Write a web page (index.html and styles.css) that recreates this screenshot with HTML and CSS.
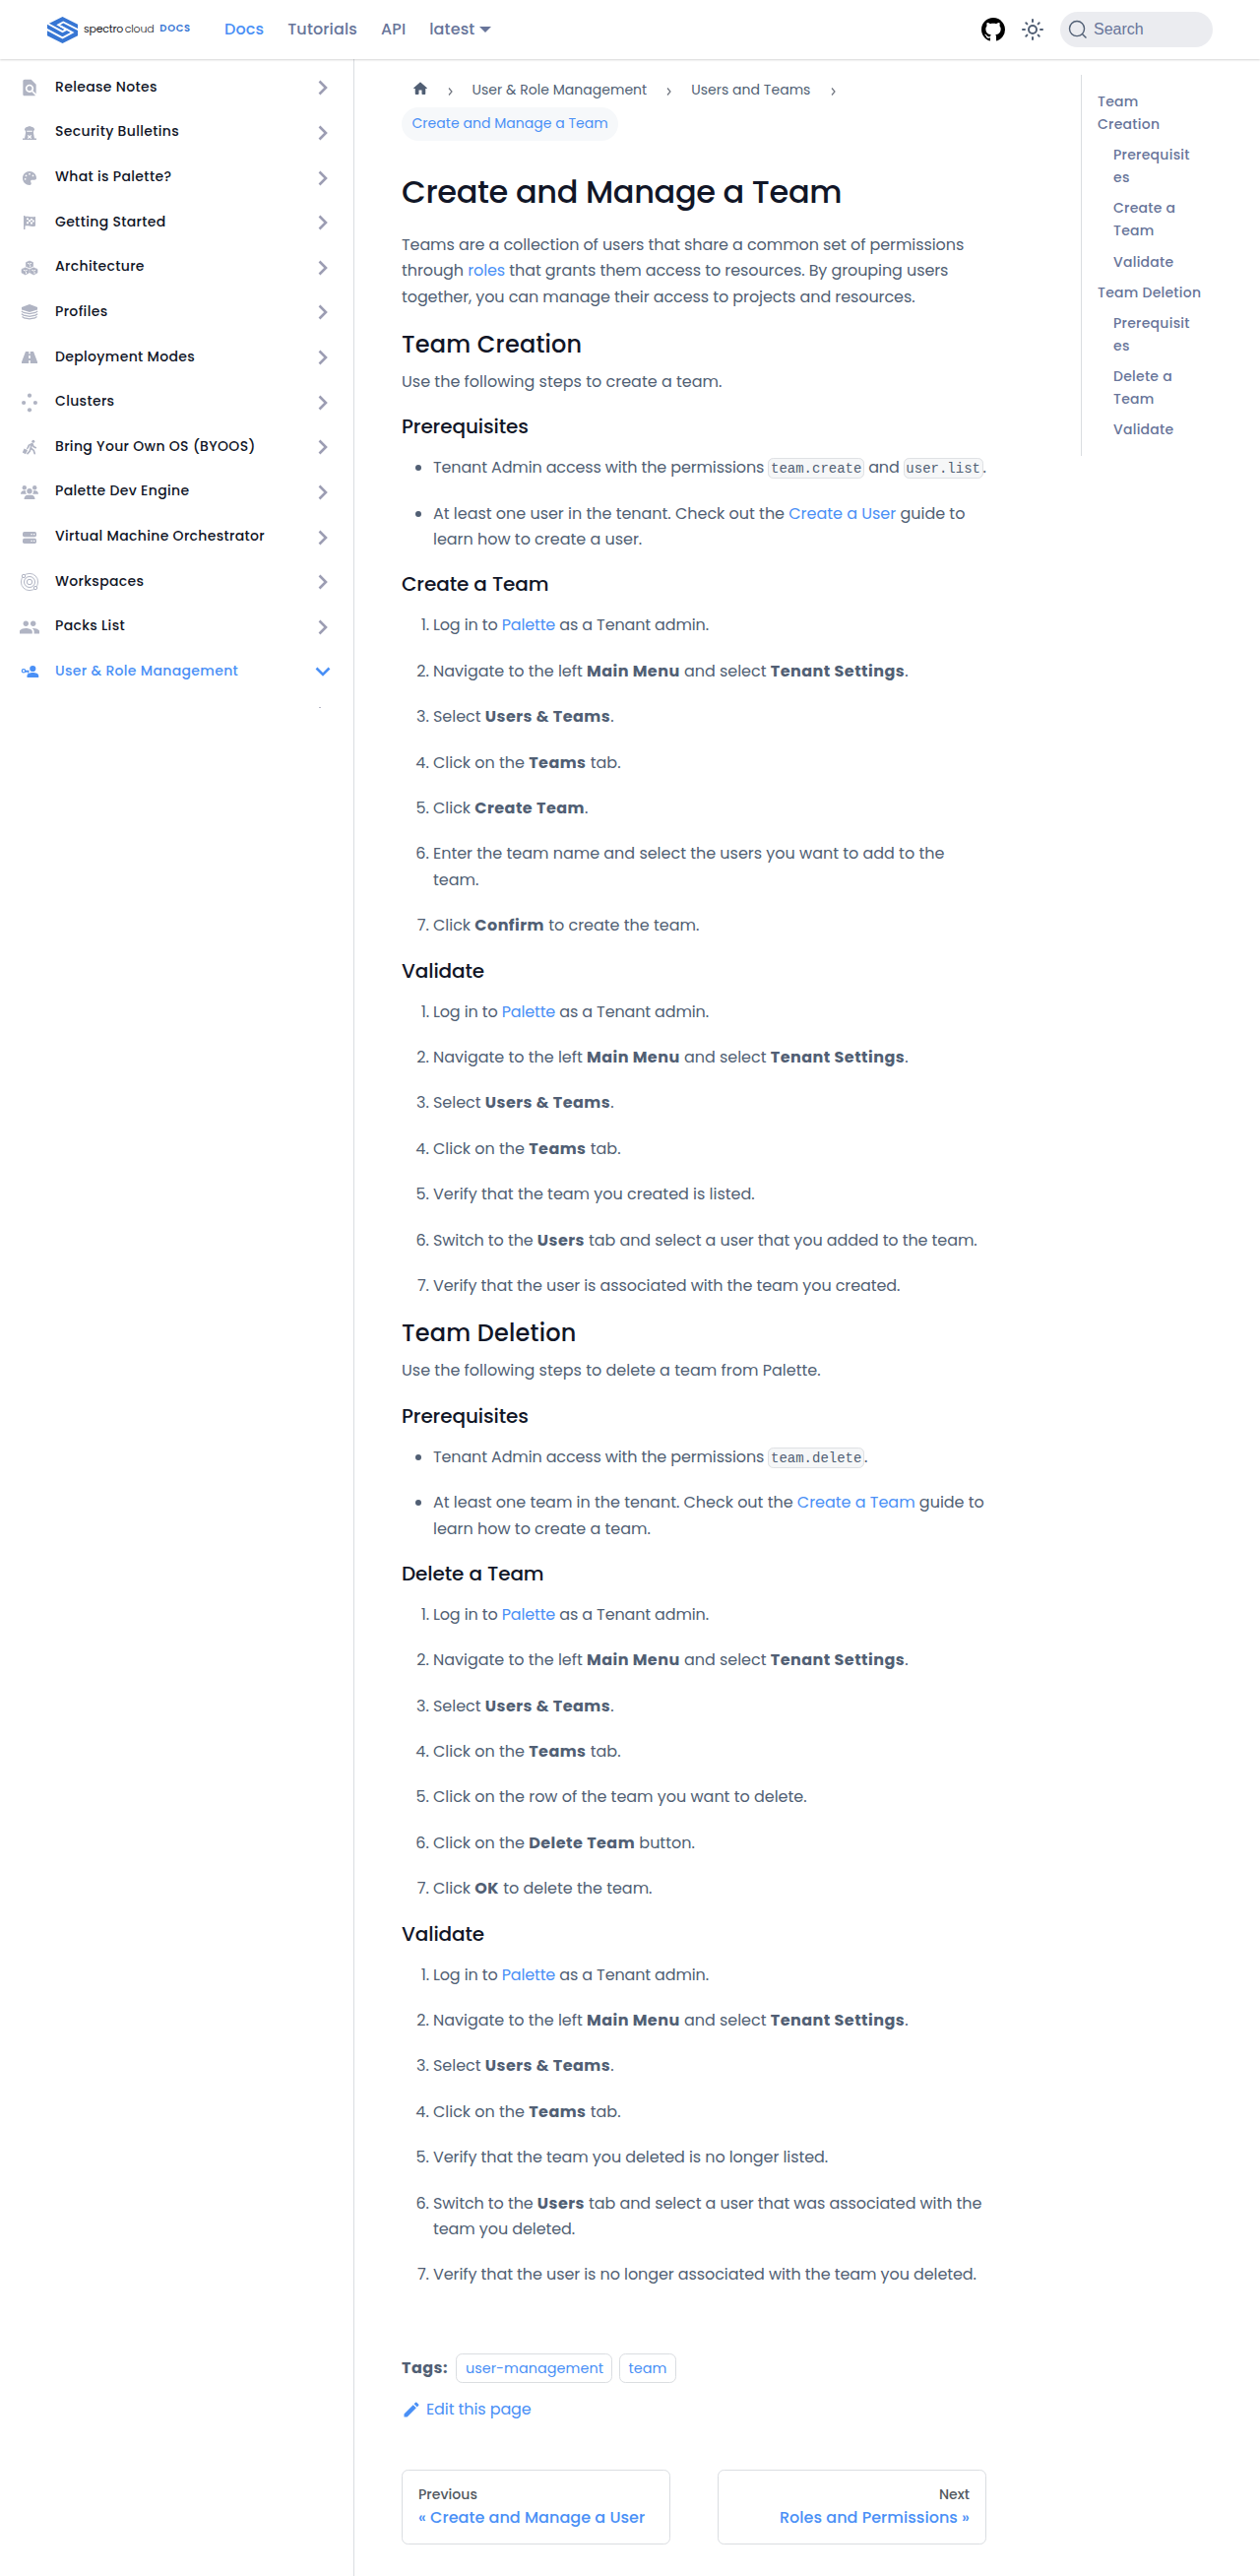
FILE: index.html
```html
<!DOCTYPE html>
<html lang="en">
<head>
<meta charset="utf-8">
<title>Create and Manage a Team | Palette</title>
<link rel="stylesheet" href="styles.css">
</head>
<body>
<nav class="navbar">
  <a class="brand" href="#">
    <svg class="brand-mark" viewBox="0 0 31 27"><path fill="#3776d4" d="M15.500 0L31 7.700V19.300L15.500 27L0 19.300V7.700Z"/><g fill="none" stroke="#fff" stroke-width="1.900"><path d="M-.5 6.500L15.500 15.200L19.600 12.900L11.200 8.300L16.200 5.500L31.500 13.300"/><path d="M-.5 12.800L15.500 21.400L25.500 16L13.500 9.500"/></g></svg>
    <span class="brand-name">spectro<span class="brand-thin"> cloud</span></span><span class="brand-docs">DOCS</span>
  </a>
  <div class="nav-links">
    <a class="active" href="#">Docs</a><a href="#">Tutorials</a><a href="#">API</a><a class="dropdown" href="#">latest</a>
  </div>
  <div class="nav-tools">
    <svg class="github" viewBox="0 0 16 16"><path d="M8 0C3.580 0 0 3.580 0 8c0 3.540 2.290 6.530 5.470 7.590.4.070.55-.17.55-.38 0-.19-.01-.82-.01-1.490-2.010.37-2.530-.49-2.690-.94-.09-.23-.48-.94-.82-1.130-.28-.15-.68-.52-.01-.53.63-.01 1.080.58 1.230.82.72 1.210 1.870.87 2.330.66.07-.52.28-.87.51-1.070-1.780-.2-3.640-.89-3.640-3.950 0-.87.31-1.590.82-2.150-.08-.2-.36-1.020.08-2.120 0 0 .67-.21 2.200.82.64-.18 1.320-.27 2-.27s1.360.09 2 .27c1.530-1.040 2.200-.82 2.200-.82.44 1.100.16 1.920.08 2.120.51.56.82 1.270.82 2.150 0 3.070-1.870 3.750-3.650 3.950.29.25.54.73.54 1.480 0 1.070-.01 1.930-.01 2.200 0 .21.15.46.55.38A8.010 8.010 0 0 0 16 8c0-4.420-3.580-8-8-8z"/></svg>
    <svg class="theme" viewBox="0 0 24 24"><g fill="none" stroke="currentColor" stroke-width="2" stroke-linecap="round"><circle cx="12" cy="12" r="4"/><path d="M12 2v2M12 20v2M2 12h2M20 12h2M5.300 5.300l1.100 1.100M17.600 17.600l1.100 1.100M5.300 18.700l1.100-1.100M17.600 6.400l1.100-1.100"/></g></svg>
    <button class="search"><svg viewBox="0 0 20 20"><path d="M14.386 14.386l4.088 4.088-4.088-4.088A7.533 7.533 0 1 1 3.733 3.733a7.533 7.533 0 0 1 10.653 10.653z" fill="none" stroke="currentColor" stroke-width="1.400" stroke-linecap="round"/></svg>Search</button>
  </div>
</nav>
<div class="layout">
  <aside class="sidebar">
    <a class="item" href="#"><svg class="ico" viewBox="0 0 24 24"><path d="M20 19.590V8l-6-6H6c-1.100 0-1.990.9-1.990 2L4 20c0 1.100.89 2 1.990 2H18c.45 0 .85-.15 1.190-.4l-4.430-4.430c-.8.52-1.740.83-2.760.83-2.760 0-5-2.240-5-5s2.240-5 5-5 5 2.240 5 5c0 1.020-.31 1.960-.83 2.750L20 19.590zM9 13c0 1.660 1.340 3 3 3s3-1.340 3-3-1.340-3-3-3-3 1.340-3 3z"/></svg>Release Notes<svg class="chev" viewBox="0 0 10 16"><path d="M1.500 1.500L8 8l-6.500 6.500"/></svg></a>
    <a class="item" href="#"><svg class="ico" viewBox="0 0 20 20"><path d="M10 3l4 1.500 1 1.500v1.500h-1V10l1 5.500h2V17H3v-1.500h2L6 10V7.500H5V6l1-1.500z"/><path d="M7.200 7.800h5.600v1H7.200zM8 12l2 1 2-1v1l-1 1 1 1v1l-2-1-2 1v-1l1-1-1-1z" fill="#fff"/></svg>Security Bulletins<svg class="chev" viewBox="0 0 10 16"><path d="M1.500 1.500L8 8l-6.500 6.500"/></svg></a>
    <a class="item" href="#"><svg class="ico" viewBox="-110 -110 732 732"><path fill-rule="evenodd" d="M512 256v2.700c-.4 36.500-33.600 61.300-70.100 61.300H344c-26.500 0-48 21.500-48 48 0 3.400.4 6.700 1 9.900 2.100 10.200 6.500 20 10.800 29.900 6.100 13.800 12.100 27.500 12.100 42 0 31.800-21.600 60.700-53.400 62-3.500.1-7 .2-10.600.2C114.600 512 0 397.400 0 256S114.600 0 256 0s256 114.600 256 256zM128 288a32 32 0 1 0-64 0 32 32 0 0 0 64 0zm0-96a32 32 0 1 0 0-64 32 32 0 0 0 0 64zm160-96a32 32 0 1 0-64 0 32 32 0 0 0 64 0zm96 96a32 32 0 1 0 0-64 32 32 0 0 0 0 64z"/></svg>What is Palette?<svg class="chev" viewBox="0 0 10 16"><path d="M1.500 1.500L8 8l-6.500 6.500"/></svg></a>
    <a class="item" href="#"><svg class="ico" viewBox="0 0 20 20"><path d="M4 3h1.500v1c3-1 5 1.200 10.500 0v9.500c-5 1.500-7-1-10.500 0V17H4z"/><path fill="#fff" d="M7 5.500h2v1.800H7zM11 6h2v1.800h-2zM9 7.300h2v2H9zM13 7.500h1.800v2H13zM7 9.300h2v2H7zM11 9.500h2v2h-2z"/></svg>Getting Started<svg class="chev" viewBox="0 0 10 16"><path d="M1.500 1.500L8 8l-6.500 6.500"/></svg></a>
    <a class="item" href="#"><svg class="ico" viewBox="0 0 20 20"><path d="M10 3l3.600 1.500v4L10 10 6.400 8.500v-4zM5.800 9.800l3.800 1.600V15l-3.800 2L2 15v-3.600zM14.200 9.800l3.800 1.600V15l-3.800 2-3.800-2v-3.600z" stroke="currentColor" stroke-linejoin="round" stroke-width=".6"/><path d="M8 5.300l2 .9 2-.9M10.700 7.300v1.800M3.800 12.200l2 .9 2-.9M6.500 14v2M12.200 12.200l2 .9 2-.9M15 14v2" fill="none" stroke="#fff" stroke-width=".9"/></svg>Architecture<svg class="chev" viewBox="0 0 10 16"><path d="M1.500 1.500L8 8l-6.500 6.500"/></svg></a>
    <a class="item" href="#"><svg class="ico" viewBox="0 0 20 20"><path d="M10 2l8 3v2.500L10 10 2 7.500V5z"/><path d="M1.800 9L4 10.400l6 1.200 6-1.200L18.200 9M1.800 11.700L4 13.100l6 1.200 6-1.200 2.200-1.400M2.500 14.400L4.500 15.900l5.500.9 5.500-.9 2-1.500" fill="none" stroke="currentColor" stroke-width="1.200"/></svg>Profiles<svg class="chev" viewBox="0 0 10 16"><path d="M1.500 1.500L8 8l-6.500 6.500"/></svg></a>
    <a class="item" href="#"><svg class="ico" viewBox="0 0 20 20"><path d="M6 4h3.300v2.500h1.400V4H14l4 10.500V16h-7.200v-3H9.200v3H2v-1.500z"/><path d="M9.200 8h1.600v3H9.200z" fill="#fff"/></svg>Deployment Modes<svg class="chev" viewBox="0 0 10 16"><path d="M1.500 1.500L8 8l-6.500 6.500"/></svg></a>
    <a class="item" href="#"><svg class="ico" viewBox="0 0 20 20"><circle cx="10" cy="2.700" r="2.100"/><circle cx="4.100" cy="10" r="2.100"/><circle cx="15.900" cy="10" r="2.100"/><circle cx="10" cy="17.300" r="2.100"/></svg>Clusters<svg class="chev" viewBox="0 0 10 16"><path d="M1.500 1.500L8 8l-6.500 6.500"/></svg></a>
    <a class="item" href="#"><svg class="ico" viewBox="0 0 20 20"><circle cx="13.800" cy="4.300" r="1.500"/><path d="M12.500 6.500L11.200 11l3 2.300 1 3.300M11 11.500l-.8 2.700-2.200 2.400M12.300 6.800L9.300 8.200l-.9 2.400M13 7l1 2.500 2.300 1.200" fill="none" stroke="currentColor" stroke-width="1.700" stroke-linecap="round" stroke-linejoin="round"/><path d="M4.500 11.500L8 13.200l-2 4L2.800 15.500z"/><path d="M7 12.500l1.700-2.700" stroke="currentColor"/></svg>Bring Your Own OS (BYOOS)<svg class="chev" viewBox="0 0 10 16"><path d="M1.500 1.500L8 8l-6.500 6.500"/></svg></a>
    <a class="item" href="#"><svg class="ico" viewBox="0 0 20 20"><circle cx="4.800" cy="5.200" r="2.200"/><circle cx="15.200" cy="5.200" r="2.200"/><circle cx="10" cy="8.800" r="2.700"/><path d="M1 11.800C1 9.500 2.500 8.300 4 8.300h2.200c-.4 1.500 0 2.600.8 3.500zM19 11.800c0-2.300-1.500-3.500-3-3.500h-2.200c.4 1.500 0 2.600-.8 3.500zM4.500 17c0-2.700 1.500-4.300 3.500-4.300h4c2 0 3.500 1.600 3.500 4.300z"/></svg>Palette Dev Engine<svg class="chev" viewBox="0 0 10 16"><path d="M1.500 1.500L8 8l-6.500 6.500"/></svg></a>
    <a class="item" href="#"><svg class="ico" viewBox="0 0 20 20"><rect x="3" y="4" width="14" height="5.300" rx="1.700"/><rect x="3" y="10.700" width="14" height="5.300" rx="1.700"/><path d="M11.500 6h1.300v1.300h-1.300zM14 6h1.300v1.300H14zM11.500 12.700h1.300V14h-1.300zM14 12.700h1.300V14H14z" fill="#fff"/></svg>Virtual Machine Orchestrator<svg class="chev" viewBox="0 0 10 16"><path d="M1.500 1.500L8 8l-6.500 6.500"/></svg></a>
    <a class="item" href="#"><svg class="ico" viewBox="0 0 20 20"><g fill="none" stroke="currentColor"><circle cx="10" cy="10" r="8.600" stroke-width=".9"/><circle cx="10" cy="10" r="5.500"/><circle cx="10" cy="10" r="2.700"/><circle cx="4" cy="4" r="1.700" fill="#fff"/><circle cx="16" cy="16" r="1.700" fill="#fff"/></g></svg>Workspaces<svg class="chev" viewBox="0 0 10 16"><path d="M1.500 1.500L8 8l-6.500 6.500"/></svg></a>
    <a class="item" href="#"><svg class="ico" viewBox="1.200 1.200 21.600 21.600"><path d="M16 11c1.660 0 2.990-1.340 2.990-3S17.660 5 16 5s-3 1.340-3 3 1.340 3 3 3zm-8 0c1.660 0 2.990-1.340 2.990-3S9.660 5 8 5 5 6.340 5 8s1.340 3 3 3zm0 2c-2.330 0-7 1.170-7 3.500V19h14v-2.500c0-2.330-4.670-3.500-7-3.500zm8 0c-.29 0-.62.02-.97.050 1.160.84 1.970 1.970 1.970 3.450V19h6v-2.500c0-2.330-4.670-3.500-7-3.500z"/></svg>Packs List<svg class="chev" viewBox="0 0 10 16"><path d="M1.500 1.500L8 8l-6.500 6.500"/></svg></a>
    <a class="item open" href="#"><svg class="ico" viewBox="0 0 20 20"><circle cx="13.300" cy="7" r="3.100"/><path d="M7.500 16v-1.700c0-2 3-3.200 5.800-3.200s5.900 1.200 5.900 3.200V16z"/><circle cx="4" cy="9.300" r="1.700" fill="none" stroke="currentColor" stroke-width="1.200"/><path d="M5.500 9.300h4M8.600 9.300v2.200M6.800 9.300V11" fill="none" stroke="currentColor" stroke-width="1.300"/></svg>User &amp; Role Management<svg class="chev" viewBox="0 0 10 16"><path d="M1.500 1.500L8 8l-6.500 6.500"/></svg></a>
    <i class="fold-dot"></i>
  </aside>
  <main class="main">
    <article class="article">
      <ul class="crumbs">
        <li><a href="#"><svg class="home" viewBox="0 0 24 24"><path d="M10 19v-5h4v5c0 .55.45 1 1 1h3c.55 0 1-.45 1-1v-7h1.700c.46 0 .68-.57.33-.87L12.670 3.600c-.38-.34-.96-.34-1.340 0l-8.360 7.530c-.34.3-.13.87.33.87H5v7c0 .55.45 1 1 1h3c.55 0 1-.45 1-1z"/></svg></a><svg class="sep" viewBox="0 0 5 8"><path d="M1 .5L4 4 1 7.500"/></svg></li>
        <li><a href="#">User &amp; Role Management</a><svg class="sep" viewBox="0 0 5 8"><path d="M1 .5L4 4 1 7.500"/></svg></li>
        <li><a href="#">Users and Teams</a><svg class="sep" viewBox="0 0 5 8"><path d="M1 .5L4 4 1 7.500"/></svg></li>
        <li><span class="current">Create and Manage a Team</span></li>
      </ul>
      <h1>Create and Manage a Team</h1>
      <p>Teams are a collection of users that share a common set of permissions through <a href="#">roles</a> that grants them access to resources. By grouping users together, you can manage their access to projects and resources.</p>
      <h2>Team Creation</h2>
      <p class="intro">Use the following steps to create a team.</p>
      <h3>Prerequisites</h3>
      <ul>
        <li class="tight">Tenant Admin access with the permissions <code>team.create</code> and <code>user.list</code>.</li>
        <li>At least one user in the tenant. Check out the <a href="#">Create a User</a> guide to learn how to create a user.</li>
      </ul>
      <h3>Create a Team</h3>
      <ol>
        <li class="tight">Log in to <a href="#">Palette</a> as a Tenant admin.</li>
        <li>Navigate to the left <strong>Main Menu</strong> and select <strong>Tenant Settings</strong>.</li>
        <li>Select <strong>Users &amp; Teams</strong>.</li>
        <li>Click on the <strong>Teams</strong> tab.</li>
        <li>Click <strong>Create Team</strong>.</li>
        <li>Enter the team name and select the users you want to add to the team.</li>
        <li>Click <strong>Confirm</strong> to create the team.</li>
      </ol>
      <h3>Validate</h3>
      <ol>
        <li class="tight">Log in to <a href="#">Palette</a> as a Tenant admin.</li>
        <li>Navigate to the left <strong>Main Menu</strong> and select <strong>Tenant Settings</strong>.</li>
        <li>Select <strong>Users &amp; Teams</strong>.</li>
        <li>Click on the <strong>Teams</strong> tab.</li>
        <li>Verify that the team you created is listed.</li>
        <li class="long">Switch to the <strong>Users</strong> tab and select a user that you added to the team.</li>
        <li class="long">Verify that the user is associated with the team you created.</li>
      </ol>
      <h2>Team Deletion</h2>
      <p class="intro">Use the following steps to delete a team from Palette.</p>
      <h3>Prerequisites</h3>
      <ul>
        <li class="tight">Tenant Admin access with the permissions <code>team.delete</code>.</li>
        <li>At least one team in the tenant. Check out the <a href="#">Create a Team</a> guide to learn how to create a team.</li>
      </ul>
      <h3>Delete a Team</h3>
      <ol>
        <li class="tight">Log in to <a href="#">Palette</a> as a Tenant admin.</li>
        <li>Navigate to the left <strong>Main Menu</strong> and select <strong>Tenant Settings</strong>.</li>
        <li>Select <strong>Users &amp; Teams</strong>.</li>
        <li>Click on the <strong>Teams</strong> tab.</li>
        <li>Click on the row of the team you want to delete.</li>
        <li>Click on the <strong>Delete Team</strong> button.</li>
        <li>Click <strong>OK</strong> to delete the team.</li>
      </ol>
      <h3>Validate</h3>
      <ol>
        <li class="tight">Log in to <a href="#">Palette</a> as a Tenant admin.</li>
        <li>Navigate to the left <strong>Main Menu</strong> and select <strong>Tenant Settings</strong>.</li>
        <li>Select <strong>Users &amp; Teams</strong>.</li>
        <li>Click on the <strong>Teams</strong> tab.</li>
        <li class="long">Verify that the team you deleted is no longer listed.</li>
        <li class="long">Switch to the <strong>Users</strong> tab and select a user that was associated with the team you deleted.</li>
        <li class="long">Verify that the user is no longer associated with the team you deleted.</li>
      </ol>
      <footer>
        <div class="tags"><strong>Tags:</strong><a href="#">user-management</a><a href="#">team</a></div>
        <a class="edit" href="#"><svg viewBox="0 0 40 40"><path d="M34.500 11.700l-3 3.100-6.300-6.300 3.100-3q.5-.5 1.200-.5t1.100.5l3.900 3.900q.5.4.5 1.100t-.5 1.200zM5 28.800l18.400-18.500 6.300 6.300L11.300 35H5v-6.200z"/></svg>Edit this page</a>
      </footer>
      <nav class="pager">
        <a href="#"><span>Previous</span>« Create and Manage a User</a>
        <a class="next" href="#"><span>Next</span>Roles and Permissions »</a>
      </nav>
    </article>
    <aside class="toc">
      <a href="#">Team<br>Creation</a>
      <a class="sub" href="#">Prerequisit<br>es</a>
      <a class="sub" href="#">Create a<br>Team</a>
      <a class="sub" href="#">Validate</a>
      <a href="#">Team Deletion</a>
      <a class="sub" href="#">Prerequisit<br>es</a>
      <a class="sub" href="#">Delete a<br>Team</a>
      <a class="sub" href="#">Validate</a>
    </aside>
  </main>
</div>
</body>
</html>
```
FILE: styles.css
```css
* { box-sizing: border-box; }
body {
  margin: 0;
  background: #fff;
  color: #515f74;
  font: 16px/1.65 Poppins, Inter, sans-serif;
}
a { color: #4a90f6; text-decoration: none; }
svg { fill: currentColor; flex: none; }

.navbar {
  position: relative;
  display: flex;
  align-items: center;
  height: 60px;
  padding: 0 48px;
  background: #fff;
  box-shadow: 0 1px 2px rgba(0, 0, 0, .17);
}
.brand { display: flex; align-items: center; width: 168px; color: #1b1b1f; }
.brand-mark { width: 31px; height: 27px; margin-right: 6px; }
.brand-name { margin-top: -3px; font-size: 11px; line-height: 20px; letter-spacing: -.25px; }
.brand-thin { font-weight: 300; word-spacing: -1px; }
.brand-docs { margin: -2px 0 0 6px; font-size: 10px; font-weight: 600; line-height: 20px; letter-spacing: .7px; color: #3776d4; }
.nav-links { display: flex; gap: 24px; padding-left: 12px; font-weight: 500; letter-spacing: .13px; }
.nav-links a { color: #68759a; }
.nav-links .active { color: #4a90f6; }
.dropdown { display: flex; align-items: center; gap: 5px; }
.dropdown::after { content: ""; border: 6.400px solid transparent; border-top-color: currentColor; border-bottom: 0; }
.nav-tools { display: flex; align-items: center; margin-left: auto; }
.github { width: 24px; height: 24px; color: #000; }
.theme { width: 24px; height: 24px; margin: 0 16px; color: #515f74; }
.search {
  display: flex;
  align-items: center;
  width: 155px;
  height: 36px;
  padding: 0 8px;
  border: 0;
  border-radius: 18px;
  background: #ebecf0;
  color: #68759a;
  font: 16px "Liberation Sans", sans-serif;
}
.search svg { width: 20px; height: 20px; margin-right: 6px; color: #515f74; }

.layout { display: flex; min-height: 2556px; }
.sidebar { width: 360px; padding: 5.500px 23px 0 20px; border-right: 1px solid #dadde1; }
.item {
  display: flex;
  align-items: center;
  height: 45.640px;
  color: #111627;
  font-size: 14px;
  font-weight: 500;
  letter-spacing: .33px;
}
.ico { width: 20px; height: 20px; margin: 2px 16px 0 0; color: #b0b4c3; }
.chev { width: 10px; height: 16px; margin: 2px 3px 0 auto; fill: none; stroke: #9c9db3; stroke-width: 2.600; }
.open, .open .ico { color: #4a90f6; }
.open .chev { stroke: #4a90f6; transform: rotate(90deg); }
.fold-dot { display: block; width: 2px; height: 1px; margin: 14px 0 0 304px; background: #b6b7c5; }

.main { display: flex; justify-content: space-between; align-items: flex-start; flex: 1; padding: 0 48px; }
.article { width: 594px; letter-spacing: -.09px; }
.crumbs { display: flex; flex-wrap: wrap; margin: 15px 0 32px; padding: 0; list-style: none; font-size: 14px; line-height: 23.100px; letter-spacing: .03px; }
.crumbs li { display: flex; align-items: center; margin: 0; }
.crumbs a, .crumbs span { display: block; padding: 5.400px 10.500px; border-radius: 17px; color: #515f74; }
.crumbs .current { background: #f6f8fa; color: #4a90f6; }
.crumbs .home { display: block; width: 18px; height: 18px; margin: 0 -1px 3px -1px; }
.sep { width: 5px; height: 8px; margin: 2px 9.300px 0 9.700px; fill: none; stroke: #6f747e; stroke-width: 1.200; }

h1, h2, h3 { margin: 0; color: #111627; font-weight: 500; line-height: 1.25; }
h1 { margin-bottom: 21px; font-size: 32px; letter-spacing: -.36px; }
h2 { margin-bottom: 10px; font-size: 24px; letter-spacing: .2px; }
h3 { margin-bottom: 16px; font-size: 20px; letter-spacing: -.1px; }
p { margin: 0 0 20px; }
.intro { letter-spacing: 0; }
.article ul:not(.crumbs), ol { margin: 0; padding-left: 32px; }
ul:not(.crumbs) > li, ol > li { margin-bottom: 20px; letter-spacing: -.02px; }
.article li.tight { letter-spacing: -.14px; white-space: nowrap; }
.article li.long { letter-spacing: -.09px; }
li strong, .tags strong { letter-spacing: .45px; }
code {
  padding: 1.600px;
  border: 1px solid #dfe1e4;
  border-radius: 5.600px;
  background: #f6f7f8;
  vertical-align: middle;
  font: 14px/1.300 "Liberation Mono", monospace;
  letter-spacing: 0;
}

footer { padding-top: 46px; }
.tags { display: flex; align-items: center; height: 30px; letter-spacing: .05px; }
.tags strong { margin-right: 8.500px; }
.tags a { margin-right: 6.500px; padding: 0 8.500px; border: 1px solid #dadde1; border-radius: 6.400px; font-size: 14.400px; line-height: 28px; }
.edit { display: flex; align-items: center; width: max-content; margin-top: 14px; letter-spacing: -.1px; }
.edit svg { width: 20px; height: 20px; margin-right: 5px; }
.pager { display: grid; grid-template-columns: 1fr 1fr; gap: 48px; margin: 48px 0 32px; letter-spacing: .04px; }
.pager a { height: 76px; padding: 13px 16px; border: 1px solid #dadde1; border-radius: 6.400px; font-weight: 500; line-height: 23px; }
.pager span { display: block; color: #525860; font-size: 14px; }
.next { text-align: right; }

.toc { width: 134px; margin-top: 16px; padding: 16px 0 7px 16px; border-left: 1px solid #dadde1; font-size: 14px; font-weight: 500; line-height: 23.100px; letter-spacing: .25px; }
.toc a { display: block; padding-bottom: 8px; color: #68759a; }
.toc .sub { padding-left: 16px; }
```
